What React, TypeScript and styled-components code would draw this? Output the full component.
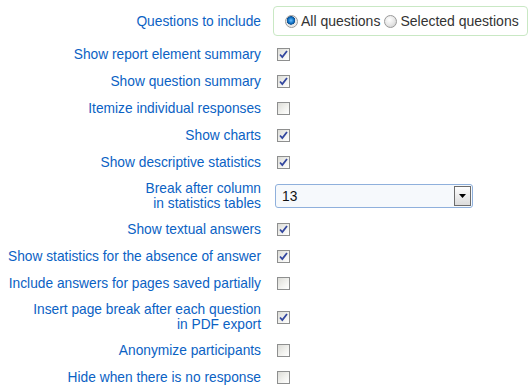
import styled, { createGlobalStyle } from 'styled-components'

const GlobalStyle = createGlobalStyle`
  html, body {
    margin: 0;
    padding: 0;
    background: #ffffff;
  }
  body {
    font-family: "Liberation Sans", Arial, sans-serif;
    font-size: 13.75px;
  }
`

interface Option {
  label: string[];
  checked?: boolean;
}

const options: Option[] = [
  { label: ['Show report element summary'], checked: true },
  { label: ['Show question summary'], checked: true },
  { label: ['Itemize individual responses'] },
  { label: ['Show charts'], checked: true },
  { label: ['Show descriptive statistics'], checked: true },
]

const options2: Option[] = [
  { label: ['Show textual answers'], checked: true },
  { label: ['Show statistics for the absence of answer'], checked: true },
  { label: ['Include answers for pages saved partially'] },
  { label: ['Insert page break after each question', 'in PDF export'], checked: true },
  { label: ['Anonymize participants'] },
  { label: ['Hide when there is no response'] },
]

function Checkbox({ checked }: { checked?: boolean }) {
  return (
    <Box>
      {checked && (
        <svg width="9" height="9" viewBox="0 0 9 9">
          <path d="M1 4.5 L3.3 7 L8 1" fill="none" stroke="#33479f" strokeWidth="1.8" />
        </svg>
      )}
    </Box>
  )
}

function Label({ lines }: { lines: string[] }) {
  return (
    <LabelCell>
      {lines.map((l, i) => (
        <div key={i}>{l}</div>
      ))}
    </LabelCell>
  )
}

function CheckRow({ option }: { option: Option }) {
  return (
    <Row $multi={option.label.length > 1}>
      <Label lines={option.label} />
      <ControlCell>
        <Checkbox checked={option.checked} />
      </ControlCell>
    </Row>
  )
}

export default function App() {
  return (
    <>
      <GlobalStyle />
      <Form>
        <TopRow>
          <Label lines={['Questions to include']} />
          <ControlCell>
            <RadioGroup>
              <RadioItem>
                <Radio selected />
                All questions
              </RadioItem>
              <RadioItem>
                <Radio />
                Selected questions
              </RadioItem>
            </RadioGroup>
          </ControlCell>
        </TopRow>
        {options.map((o) => (
          <CheckRow key={o.label[0]} option={o} />
        ))}
        <Row $multi>
          <Label lines={['Break after column', 'in statistics tables']} />
          <ControlCell>
            <Select>
              <SelectValue>13</SelectValue>
              <SelectButton>
                <svg width="7" height="4" viewBox="0 0 7 4">
                  <path d="M0 0 H7 L3.5 4 Z" fill="#000" />
                </svg>
              </SelectButton>
            </Select>
          </ControlCell>
        </Row>
        {options2.map((o) => (
          <CheckRow key={o.label[0]} option={o} />
        ))}
      </Form>
    </>
  )
}

const Form = styled.div`
  width: 532px;
  display: flex;
  flex-direction: column;
`

const Row = styled.div<{ $multi?: boolean }>`
  display: grid;
  grid-template-columns: 261px 1fr;
  column-gap: 16px;
  align-items: center;
  padding: ${(p) => (p.$multi ? '5px 0' : '6px 0')};
  line-height: 15px;
`

const TopRow = styled(Row)`
  column-gap: 12px;
  padding: 6px 0 5px;
`

const LabelCell = styled.div`
  text-align: right;
  color: #0b62c4;
  white-space: nowrap;
`

const ControlCell = styled.div`
  display: flex;
  align-items: center;
`

const Box = styled.span`
  box-sizing: border-box;
  width: 13px;
  height: 13px;
  border: 1px solid #8e8f8f;
  background: linear-gradient(135deg, #dcdcd7 0%, #f3f3f0 60%, #ffffff 100%);
  display: flex;
  align-items: center;
  justify-content: center;
`

const RadioGroup = styled.div`
  box-sizing: border-box;
  width: 255px;
  height: 30px;
  border: 1px solid #c9e8c4;
  border-radius: 4px;
  display: flex;
  align-items: center;
  gap: 4px;
  padding: 0 0 0 11px;
  color: #333333;
  font-size: 14px;
`

const RadioItem = styled.label`
  display: flex;
  align-items: center;
  gap: 3px;
  white-space: nowrap;
`

const Radio = styled.span<{ selected?: boolean }>`
  box-sizing: border-box;
  width: 13px;
  height: 13px;
  border-radius: 50%;
  border: 1px solid #9a9a9a;
  background: ${(p) =>
    p.selected
      ? 'radial-gradient(circle at 45% 40%, #6ec0ff 0%, #1476c8 30%, #0d4f91 45%, #e4e4e4 50%, #f6f6f6 100%)'
      : 'radial-gradient(circle at 40% 35%, #ffffff 0%, #e8e8e8 50%, #c8c8c8 100%)'};
`

const Select = styled.div`
  box-sizing: border-box;
  width: 198px;
  height: 24px;
  margin-left: -2px;
  border: 1px solid #8fb0dc;
  border-radius: 3px;
  background: #f6f9fc;
  display: flex;
  align-items: center;
  justify-content: space-between;
  padding: 0 1px 0 6px;
  color: #111;
  font-size: 13.75px;
`

const SelectValue = styled.span``

const SelectButton = styled.span`
  box-sizing: border-box;
  width: 17px;
  align-self: stretch;
  margin: 1px 0;
  border: 1px solid #6c6c6c;
  background: linear-gradient(#fdfdfd, #dcdcdc);
  display: flex;
  align-items: center;
  justify-content: center;
`
